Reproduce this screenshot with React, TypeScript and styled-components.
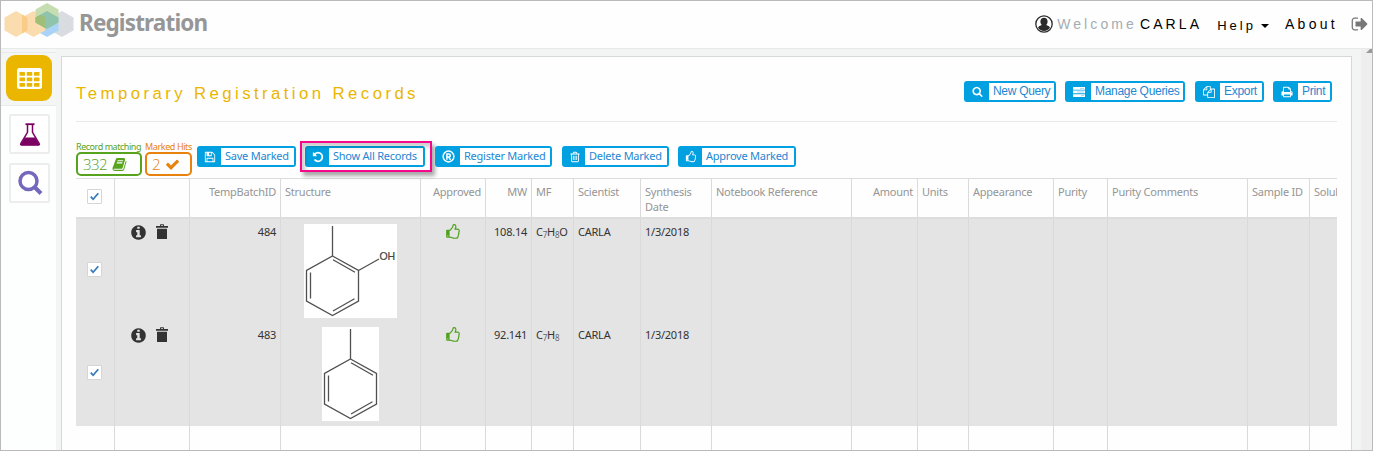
import React from "react";
import styled, { createGlobalStyle } from "styled-components";

const UI = `"Noto Sans", "Open Sans", sans-serif`;
const ARIAL = `"Liberation Sans", Arial, sans-serif`;
const BLUE = "#00a0e1";
const LINE = "#dddddd";

const GlobalStyle = createGlobalStyle`
  *, *::before, *::after { box-sizing: border-box; }
  html, body { margin: 0; padding: 0; background: #fff; }
  body { overflow: hidden; font-family: ${UI}; font-size: 12px; color: #333; }
`;

const Frame = styled.div`
  width: 1373px;
  height: 451px;
  border: 1px solid #bababa;
  display: flex;
  flex-direction: column;
  overflow: hidden;
  background: #fdfefe;
`;

const Header = styled.header`
  height: 48px;
  flex: none;
  display: flex;
  align-items: flex-start;
  border-bottom: 1px solid #e8eaea;
  background: #fefefe;
`;

const LogoMark = styled.svg`
  display: block;
  margin: 2px 0 0 3px;
`;

const LogoText = styled.div`
  margin: 7px 0 0 4px;
  font: 700 22.5px/30px ${UI};
  letter-spacing: -0.85px;
  color: #969696;
`;

const UserNav = styled.nav`
  margin-left: auto;
  display: flex;
  align-items: center;
  height: 46px;
  font-family: ${ARIAL};
  color: #000;
`;

const NavText = styled.span<{ $size?: number; $spacing: number; $color?: string; $ml: number; $drop?: number }>`
  font-size: ${(p) => p.$size ?? 14}px;
  line-height: 16px;
  letter-spacing: ${(p) => p.$spacing}px;
  color: ${(p) => p.$color ?? "#000"};
  margin-left: ${(p) => p.$ml}px;
  padding-top: ${(p) => p.$drop ?? 0}px;
`;

const Caret = styled.span`
  width: 0;
  height: 0;
  margin: 4px 0 0 5px;
  border: 4px solid transparent;
  border-top-color: #000;
  border-bottom: 0;
`;

const SignOut = styled.span`
  margin: 0 3px 0 13px;
  display: flex;
  color: #777;
`;

const Body = styled.div`
  flex: 1;
  min-height: 0;
  display: flex;
`;

const Sidebar = styled.aside`
  width: 55px;
  flex: none;
  border-top: 3px solid #f4f6f5;
  display: flex;
  flex-direction: column;
  align-items: flex-start;
  background: #fdfefe;
`;

const ActiveSlot = styled.div`
  width: 100%;
  height: 54px;
  border-top: 1px solid #e9ebeb;
  border-bottom: 1px solid #e9ebeb;
  background: #f4f6f5;
  padding: 2px 0 0 5px;
`;

const ActiveTile = styled.div`
  width: 46px;
  height: 46px;
  border-radius: 9px;
  background: #eab600;
  display: flex;
  align-items: center;
  justify-content: center;
`;

const Tile = styled.div<{ $mt: number }>`
  width: 41px;
  height: 40px;
  margin: ${(p) => p.$mt}px 0 0 8px;
  border: 2px solid #ededed;
  border-radius: 2px;
  background: #fff;
  display: flex;
  align-items: center;
  justify-content: center;
`;

const Main = styled.main`
  flex: 1;
  min-width: 0;
  background: #f3f5f5;
  padding: 7px 9px 0 5px;
`;

const Scrollbar = styled.div`
  width: 11px;
  flex: none;
  background: #eeeeee;
  display: flex;
  justify-content: flex-end;
`;

const Panel = styled.section`
  height: 100%;
  border: 1px solid #d6d9d9;
  border-bottom: 0;
  background: #fefefe;
  padding: 0 14px;
  display: flex;
  flex-direction: column;
`;

const TitleBar = styled.div`
  height: 65px;
  flex: none;
  display: flex;
  align-items: flex-start;
  justify-content: space-between;
  border-bottom: 1px solid #e8e8e8;
`;

const Title = styled.h1`
  margin: 27px 0 0;
  font: 400 16.8px/20px ${ARIAL};
  letter-spacing: 3.41px;
  color: #eab600;
  white-space: nowrap;
`;

const TopActions = styled.div`
  display: flex;
  margin: 24px 5px 0 0;
  gap: 9px;
  font: 400 12px/17px ${ARIAL};
  letter-spacing: -0.3px;
`;

const Toolbar = styled.div`
  height: 56px;
  flex: none;
  display: flex;
  padding-top: 19px;
`;

const Counter = styled.div<{ $color: string; $width: number; $gap: number }>`
  width: ${(p) => p.$width}px;
  margin-right: ${(p) => p.$gap}px;
  color: ${(p) => p.$color};
`;

const CounterLabel = styled.div<{ $spacing: number }>`
  height: 11px;
  font-size: 9px;
  line-height: 11px;
  letter-spacing: ${(p) => p.$spacing}px;
  white-space: nowrap;
`;

const CounterBox = styled.div`
  height: 24px;
  border: 2px solid currentColor;
  border-radius: 5px;
  display: flex;
  align-items: center;
  padding-left: 5px;
  gap: 5px;
  font: 300 15px/20px "Open Sans", ${UI};
  letter-spacing: -0.6px;
`;

const ActionRow = styled.div`
  display: flex;
  gap: 9px;
  padding-top: 5px;
  font: 400 11px/16px ${UI};
  letter-spacing: -0.24px;
`;

const Button = styled.button<{ $width: number; $icon: number; $after?: number }>`
  position: relative;
  width: ${(p) => p.$width}px;
  height: 21px;
  flex: none;
  margin: 0 ${(p) => p.$after ?? 0}px 0 0;
  padding: 0;
  border: 2px solid ${BLUE};
  border-radius: 3px;
  background: ${BLUE};
  display: grid;
  grid-template-columns: ${(p) => p.$icon - 2}px 1fr;
  font: inherit;
  letter-spacing: inherit;
  color: #2487d3;
`;

const ButtonIcon = styled.span`
  display: flex;
  align-items: center;
  justify-content: center;
  color: #fff;
`;

const ButtonLabel = styled.span`
  background: #fff;
  padding-left: 4px;
  text-align: left;
  white-space: nowrap;
`;

const Highlight = styled.span`
  position: absolute;
  left: -7px;
  top: -7px;
  width: 132px;
  height: 31px;
  border: 2px solid #f7078b;
  box-shadow: 3px 4px 4px rgba(0, 0, 0, 0.34), inset 3px 4px 4px rgba(0, 0, 0, 0.2);
  pointer-events: none;
`;

const Grid = styled.div`
  flex: 1;
  min-height: 0;
  display: flex;
  flex-direction: column;
  overflow: hidden;
  width: 1261px;
  border-top: 1px solid ${LINE};
`;

const Row = styled.div<{ $height?: number; $kind: "head" | "data" | "rest" }>`
  display: grid;
  grid-template-columns: 38px 75px 91px 140px 65px 46px 42px 67px 71px 140px 66px 51px 85px 54px 140px 62px 28px;
  ${(p) => (p.$height ? `height: ${p.$height}px; flex: none;` : "flex: 1;")}
  ${(p) => p.$kind === "head" && `border-bottom: 2px solid ${LINE}; color: #959595;`}
  ${(p) => p.$kind === "data" && "background: #e4e4e4; color: #333;"}
`;

const Cell = styled.div<{ $align?: "right" | "center" }>`
  min-width: 0;
  overflow: hidden;
  padding: 5px 4px;
  font-size: 11px;
  line-height: 15px;
  letter-spacing: -0.24px;
  text-align: ${(p) => p.$align ?? "left"};
  & + & { border-left: 1px solid #dadada; }
`;

const NoWrap = styled.span`
  white-space: nowrap;
`;

const CheckCell = styled(Cell)<{ $top: number }>`
  display: flex;
  padding: ${(p) => p.$top}px 0 0 11px;
`;

const CheckBox = styled.span`
  width: 15px;
  height: 15px;
  border: 1px solid #d6d6d6;
  border-radius: 1px;
  background: #fff;
  display: flex;
  align-items: center;
  justify-content: center;
`;

const ToolsCell = styled(Cell)`
  display: flex;
  align-items: flex-start;
  gap: 9px;
  padding: 5px 0 0 15px;
`;

const Picture = styled.svg`
  display: block;
  margin: 0 auto;
  background: #fff;
`;

const Sub = styled.sub`
  font-size: 8px;
  line-height: 0;
  vertical-align: -2px;
  color: #666;
`;

const PATHS: Record<string, string> = {
  thumb:
    "M384 1344q0-26-19-45t-45-19-45 19-19 45 19 45 45 19 45-19 19-45zm1152-576q0-51-39-89.5t-89-38.5h-352q0-58 48-159.5t48-160.5q0-98-32-145t-128-47q-26 26-38 85t-30.5 125.5-59.5 109.5q-22 23-77 91-4 5-23 30t-31.5 41-34.5 42.5-40 44-38.5 35.5-40 27-35.5 9h-32v640h32q13 0 31.5 3t33 6.5 38 11 35 11.5 35.5 12.5 29 10.5q211 73 342 73h121q192 0 192-167 0-26-5-56 30-16 47.5-52.5t17.5-73.5-18-69q53-50 53-119 0-25-10-55.5t-25-47.5q32-1 53.5-47t21.5-81zm128-1q0 89-49 163 9 33 9 69 0 77-38 144 3 21 3 43 0 101-60 178 1 139-85 219.5t-227 80.5h-129q-96 0-189.5-22.5t-216.5-65.5q-116-40-138-40h-288q-53 0-90.5-37.5t-37.5-90.5v-640q0-53 37.5-90.5t90.5-37.5h274q36-24 137-155 58-75 107-128 24-25 35.5-85.5t30.5-126.5 62-108q39-37 90-37 84 0 151 32.5t102 101.5 35 186q0 93-48 192h176q104 0 180 76t76 179z",
  check:
    "M1671 566q0 40-28 68l-724 724-136 136q-28 28-68 28t-68-28l-136-136-362-362q-28-28-28-68t28-68l136-136q28-28 68-28t68 28l294 295 656-657q28-28 68-28t68 28l136 136q28 28 28 68z",
  search:
    "M1216 832q0-185-131.5-316.5t-316.5-131.5-316.5 131.5-131.5 316.5 131.5 316.5 316.5 131.5 316.5-131.5 131.5-316.5zm512 832q0 52-38 90t-90 38q-54 0-90-38l-343-342q-179 124-399 124-143 0-273.5-55.5t-225-150-150-225-55.5-273.5 55.5-273.5 150-225 225-150 273.5-55.5 273.5 55.5 225 150 150 225 55.5 273.5q0 220-124 399l343 343q37 37 37 90z",
  undo:
    "M1664 896q0 156-61 298t-164 245-245 164-298 61q-172 0-327-72.5t-264-204.5q-7-10-6.5-22.5t8.5-20.5l137-138q10-9 25-9 16 2 23 12 73 95 179 147t225 52q104 0 198.5-40.5t163.5-109.5 109.5-163.5 40.5-198.5-40.5-198.5-109.5-163.5-163.5-109.5-198.5-40.5q-98 0-188 35.5t-160 101.5l137 138q31 30 14 69-17 40-59 40h-448q-26 0-45-19t-19-45v-448q0-42 40-59 39-17 69 14l130 129q107-101 244.5-156.5t284.5-55.5q156 0 298 61t245 164 164 245 61 298z",
  save:
    "M512 1536h768v-384h-768v384zm896 0h128v-896q0-14-10-38.5t-20-34.5l-281-281q-10-10-34-20t-39-10v416q0 40-28 68t-68 28h-576q-40 0-68-28t-28-68v-416h-128v1280h128v-416q0-40 28-68t68-28h832q40 0 68 28t28 68v416zm-384-928v-320q0-13-9.5-22.5t-22.5-9.5h-192q-13 0-22.5 9.5t-9.5 22.5v320q0 13 9.5 22.5t22.5 9.5h192q13 0 22.5-9.5t9.5-22.5zm640 32v928q0 40-28 68t-68 28h-1344q-40 0-68-28t-28-68v-1344q0-40 28-68t68-28h928q40 0 88 20t76 48l280 280q28 28 48 76t20 88z",
  print:
    "M448 1536h896v-256h-896v256zm0-640h896v-384h-160q-40 0-68-28t-28-68v-160h-640v640zm1152 64q0-26-19-45t-45-19-45 19-19 45 19 45 45 19 45-19 19-45zm128 0v416q0 13-9.5 22.5t-22.5 9.5h-224v160q0 40-28 68t-68 28h-960q-40 0-68-28t-28-68v-160h-224q-13 0-22.5-9.5t-9.5-22.5v-416q0-79 56.5-135.5t135.5-56.5h64v-544q0-40 28-68t68-28h672q40 0 88 20t76 48l152 152q28 28 48 76t20 88v256h64q79 0 135.5 56.5t56.5 135.5z",
  files:
    "M1696 384q40 0 68 28t28 68v1216q0 40-28 68t-68 28h-960q-40 0-68-28t-28-68v-288h-544q-40 0-68-28t-28-68v-672q0-40 20-88t48-76l408-408q28-28 76-48t88-20h416q40 0 68 28t28 68v328q68-40 128-40h416zm-544 213l-299 299h299v-299zm-640-384l-299 299h299v-299zm196 647l316-316v-416h-384v416q0 40-28 68t-68 28h-416v640h512v-256q0-40 20-88t48-76zm956 804v-1152h-384v416q0 40-28 68t-68 28h-416v640h896z",
  signOut:
    "M704 1440q0 4 1 20t.5 26.5-3 23.5-10 19.5-20.5 6.5h-320q-119 0-203.5-84.5t-84.5-203.5v-704q0-119 84.5-203.5t203.5-84.5h320q13 0 22.5 9.5t9.5 22.5q0 4 1 20t.5 26.5-3 23.5-10 19.5-20.5 6.5h-320q-66 0-113 47t-47 113v704q0 66 47 113t113 47h312l11.5 1 11.5 3 8 5.5 7 9 2 13.5zm928-544q0 26-19 45l-544 544q-19 19-45 19t-45-19-19-45v-288h-448q-26 0-45-19t-19-45v-384q0-26 19-45t45-19h448v-288q0-26 19-45t45-19 45 19l544 544q19 19 19 45z",
  trash:
    "M704 736v576q0 14-9 23t-23 9h-64q-14 0-23-9t-9-23v-576q0-14 9-23t23-9h64q14 0 23 9t9 23zm256 0v576q0 14-9 23t-23 9h-64q-14 0-23-9t-9-23v-576q0-14 9-23t23-9h64q14 0 23 9t9 23zm256 0v576q0 14-9 23t-23 9h-64q-14 0-23-9t-9-23v-576q0-14 9-23t23-9h64q14 0 23 9t9 23zm128 724v-948h-896v948q0 22 7 40.5t14.5 27 10.5 8.5h832q3 0 10.5-8.5t14.5-27 7-40.5zm-672-1076h448l-48-117q-7-9-17-11h-317q-10 2-17 11zm928 32v64q0 14-9 23t-23 9h-96v948q0 83-47 143.5t-113 60.5h-832q-66 0-113-58.5t-47-141.5v-952h-96q-14 0-23-9t-9-23v-64q0-14 9-23t23-9h309l70-167q15-37 54-63t79-26h320q40 0 79 26t54 63l70 167h309q14 0 23 9t9 23z",
  info:
    "M1152 1376v-160q0-14-9-23t-23-9h-96v-512q0-14-9-23t-23-9h-320q-14 0-23 9t-9 23v160q0 14 9 23t23 9h96v320h-96q-14 0-23 9t-9 23v160q0 14 9 23t23 9h448q14 0 23-9t9-23zm-128-896v-160q0-14-9-23t-23-9h-192q-14 0-23 9t-9 23v160q0 14 9 23t23 9h192q14 0 23-9t9-23zm640 416q0 209-103 385.5t-279.5 279.5-385.5 103-385.5-103-279.5-279.5-103-385.5 103-385.5 279.5-279.5 385.5-103 385.5 103 279.5 279.5 103 385.5z",
  book:
    "M1703 478q40 57 18 129l-275 906q-19 64-76.5 107.5t-122.5 43.5h-923q-77 0-148.5-53.5t-99.5-131.5q-24-67-2-127 0-4 3-27t4-37q1-8-3-21.5t-3-19.5q2-11 8-21t16.5-23.5 16.5-23.5q23-38 45-91.5t30-91.5q3-10 .5-30t-.5-28q3-11 17-28t17-23q21-36 42-92t25-90q1-9-2.5-32t.5-28q4-13 22-30.5t22-22.5q19-26 42.5-84.5t27.5-96.5q1-8-3-25.5t-2-26.5q2-8 9-18t18-23 17-21q8-12 16.5-30.5t15-35 16-36 19.5-32 26.5-23.5 36-11.5 47.5 5.5l-1 3q38-9 51-9h761q74 0 114 56t18 130l-274 906q-36 119-71.5 153.5t-128.5 34.5h-869q-27 0-38 15-11 16-1 43 24 70 144 70h923q29 0 56-15.5t35-41.5l300-987q7-22 5-57 38 15 59 43zm-1064 2q-4 13 2 22.5t20 9.5h608q13 0 25.5-9.5t16.5-22.5l21-64q4-13-2-22.5t-20-9.5h-608q-13 0-25.5 9.5t-16.5 22.5zm-83 256q-4 13 2 22.5t20 9.5h608q13 0 25.5-9.5t16.5-22.5l21-64q4-13-2-22.5t-20-9.5h-608q-13 0-25.5 9.5t-16.5 22.5z",
};

const Glyph = ({ name, size }: { name: string; size: number }) => (
  <svg width={size} height={size} viewBox="0 0 1792 1792" fill="currentColor">
    <path d={PATHS[name]} />
  </svg>
);

const ServerIcon = () => (
  <svg width="12" height="10" viewBox="0 0 12 10">
    <path fill="#fff" d="M0 0h12v2.7H0zM0 3.6h12v2.7H0zM0 7.2h12v2.7H0z" />
    <path stroke={BLUE} strokeWidth="0.8" d="M7 1.4h4M4 5h7M8 8.6h3" opacity="0.45" />
  </svg>
);

const RegisteredIcon = () => (
  <svg width="13" height="13" viewBox="0 0 13 13" fill="none" stroke="#fff">
    <circle cx="6.5" cy="6.5" r="5.4" strokeWidth="1.5" />
    <path strokeWidth="1.5" d="M4.9 9.8V3.9h1.9a1.5 1.5 0 0 1 0 3.1H4.9M6.8 7l1.7 2.8" />
  </svg>
);

const TrashSolid = () => (
  <svg width="12" height="15" viewBox="0 0 12 15" fill="#333">
    <path d="M0 2h4V.9Q4 .3 4.700.3h2.600Q8 .3 8 .9V2h4v1.700H0zM5 1.200V2h2v-.8zM1 4.700h10V15H1z" />
  </svg>
);

const CheckMark = () => (
  <svg width="9" height="9" viewBox="0 0 9 9" fill="none" stroke="#3278be" strokeWidth="1.7">
    <path d="M.7 4.700 3.100 7.300 8.300 1.200" />
  </svg>
);

const hex = (cx: number, cy: number, rx: number, ry: number) =>
  `M${cx} ${cy - ry}L${cx + rx} ${cy - ry / 2}V${cy + ry / 2}L${cx} ${cy + ry}L${cx - rx} ${cy + ry / 2}V${cy - ry / 2}Z`;

const Logo = () => (
  <LogoMark width="71" height="36" viewBox="4 3 71 36">
    <path d={hex(62, 24, 11.5, 13)} fill="#d9dce0" />
    <path d={hex(47, 24, 11.5, 13)} fill="#a9d4f8" />
    <path d={hex(33.5, 24, 11.5, 13)} fill="#fbdcae" />
    <path d={hex(16, 24, 11.5, 13)} fill="#fbdcae" />
    <path d="M22 14.500l5.500 3v13l-5.500 3z" fill="#f9cd88" />
    <path d={hex(47, 16, 11.5, 13)} fill="#c5ddb0" />
    <path d="M47 11 58.500 17.500V22.500L47 29 35.500 22.500V17.500Z" fill="#8fc3ab" />
    <path d="M35.500 17.500 40.500 14.700 45 17.500V27.900L35.500 22.500Z" fill="#9fbf76" />
  </LogoMark>
);

const UserIcon = () => (
  <svg width="18" height="18" viewBox="0 0 18 18">
    <circle cx="9" cy="9" r="8.200" fill="#fff" stroke="#2b2b2b" strokeWidth="1.300" />
    <path fill="#2b2b2b" d="M9 2.800c2.300 0 3.600 1.500 3.600 3.600 0 1.500-.6 2.900-1.500 3.700 1.900.7 3.300 1.300 3.900 2.400A7 7 0 0 1 9 16a7 7 0 0 1-6-3.500c.6-1.100 2-1.700 3.900-2.400C6 9.300 5.400 7.900 5.400 6.400 5.400 4.300 6.700 2.800 9 2.800z" />
  </svg>
);

const TableIcon = () => (
  <svg width="25" height="21" viewBox="0 0 25 21">
    <rect width="25" height="21" rx="2.500" fill="#fff" />
    <g fill="#eab600">
      {[4, 9.5, 15].map((y) =>
        [2.5, 9.75, 17].map((x) => <rect key={`${x}-${y}`} x={x} y={y} width="5.500" height="3.700" rx="0.400" />),
      )}
    </g>
  </svg>
);

const FlaskIcon = () => (
  <svg width="22" height="23" viewBox="0 0 22 23">
    <path d="M6.500 1.200h9" stroke="#7b0062" strokeWidth="1.800" />
    <path d="M8.500 1.500v7.800L1.800 20.700q-.5 1.200.8 1.200h16.800q1.300 0 .8-1.200L13.500 9.300V1.500" fill="none" stroke="#7b0062" strokeWidth="1.500" />
    <path d="M6 14.500h10l4.300 7q0 .8-1 .8H2.700q-1 0-1-.8z" fill="#7b0062" />
  </svg>
);

const Ring = ({ cx }: { cx: number }) => (
  <g>
    <path d={`M${cx} 2V32`} />
    <path d={`M${cx} 32l26 14.500v30.500L${cx} 91.500l-26-14.500V46.500z`} />
    <path d={`M${cx + 0.5} 35.800l22 12.500M${cx + 22} 74.800l-21.500 12.200M${cx - 22} 48.500v26`} />
  </g>
);

const Cresol = () => (
  <Picture width="93" height="94" viewBox="0 0 93 94" fill="none" stroke="#505050" strokeWidth="1.300">
    <Ring cx={28.5} />
    <path d="M54.500 46.500 75 35" />
    <text x="75.500" y="35.700" fill="#444" stroke="#444" strokeWidth="0.200" fontFamily="Liberation Sans" fontSize="10.500">OH</text>
  </Picture>
);

const Toluene = () => (
  <Picture width="57" height="94" viewBox="0 0 57 94" fill="none" stroke="#505050" strokeWidth="1.300">
    <Ring cx={28.5} />
  </Picture>
);

type ActionProps = { width: number; icon: number; glyph: React.ReactNode; label: string; marked?: boolean; after?: number };
const Action = ({ width, icon, glyph, label, marked, after }: ActionProps) => (
  <Button $width={width} $icon={icon} $after={after}>
    <ButtonIcon>{glyph}</ButtonIcon>
    <ButtonLabel>{label}</ButtonLabel>
    {marked && <Highlight />}
  </Button>
);

const SelectBox = ({ top }: { top: number }) => (
  <CheckCell $top={top}>
    <CheckBox>
      <CheckMark />
    </CheckBox>
  </CheckCell>
);

const Green = styled.span`
  display: flex;
  justify-content: center;
  color: #4ea01c;
`;

type Column = { title: string; right?: boolean; wrap?: boolean };
const COLUMNS: Column[] = [
  { title: "" },
  { title: "TempBatchID", right: true },
  { title: "Structure" },
  { title: "Approved", right: true },
  { title: "MW", right: true },
  { title: "MF" },
  { title: "Scientist" },
  { title: "Synthesis Date", wrap: true },
  { title: "Notebook Reference" },
  { title: "Amount", right: true },
  { title: "Units" },
  { title: "Appearance" },
  { title: "Purity" },
  { title: "Purity Comments" },
  { title: "Sample ID" },
  { title: "Solubility" },
];

type RecordProps = { id: string; picture: React.ReactNode; mw: string; mf: React.ReactNode; height: number };
const RecordRow = ({ id, picture, mw, mf, height }: RecordProps) => (
  <Row $kind="data" $height={height}>
    <SelectBox top={43} />
    <ToolsCell>
      <Glyph name="info" size={17} />
      <TrashSolid />
    </ToolsCell>
    <Cell $align="right">{id}</Cell>
    <Cell>{picture}</Cell>
    <Cell>
      <Green>
        <Glyph name="thumb" size={16} />
      </Green>
    </Cell>
    <Cell $align="right">{mw}</Cell>
    <Cell>
      <NoWrap>{mf}</NoWrap>
    </Cell>
    <Cell>CARLA</Cell>
    <Cell>1/3/2018</Cell>
    {COLUMNS.slice(8).map((c) => (
      <Cell key={c.title} />
    ))}
  </Row>
);

export default function App() {
  return (
    <Frame>
      <GlobalStyle />
      <Header>
        <Logo />
        <LogoText>Registration</LogoText>
        <UserNav>
          <UserIcon />
          <NavText $spacing={3.1} $color="#a3adb3" $ml={4}>Welcome</NavText>
          <NavText $spacing={3.1} $ml={3}>CARLA</NavText>
          <NavText $spacing={3} $size={13} $ml={15} $drop={3}>Help</NavText>
          <Caret />
          <NavText $spacing={3.3} $ml={16}>About</NavText>
          <SignOut>
            <Glyph name="signOut" size={18} />
          </SignOut>
        </UserNav>
      </Header>
      <Body>
        <Sidebar>
          <ActiveSlot>
            <ActiveTile>
              <TableIcon />
            </ActiveTile>
          </ActiveSlot>
          <Tile $mt={8}>
            <FlaskIcon />
          </Tile>
          <Tile $mt={9}>
            <svg width="26" height="26" viewBox="0 0 26 26" fill="none" stroke="#7468bd">
              <circle cx="11.500" cy="11" r="8.500" strokeWidth="3.500" />
              <path d="M17.500 17l6.500 6.500" strokeWidth="4" />
            </svg>
          </Tile>
        </Sidebar>
        <Main>
          <Panel>
            <TitleBar>
              <Title>Temporary Registration Records</Title>
              <TopActions>
                <Action width={92} icon={25} glyph={<Glyph name="search" size={11} />} label="New Query" />
                <Action width={120} icon={26} after={1} glyph={<ServerIcon />} label="Manage Queries" />
                <Action width={69} icon={25} glyph={<Glyph name="files" size={12} />} label="Export" />
                <Action width={59} icon={25} glyph={<Glyph name="print" size={12} />} label="Print" />
              </TopActions>
            </TitleBar>
            <Toolbar>
              <Counter $color="#57a31d" $width={66} $gap={3}>
                <CounterLabel $spacing={-0.46}>Record matching</CounterLabel>
                <CounterBox>
                  332 <Glyph name="book" size={15} />
                </CounterBox>
              </Counter>
              <Counter $color="#e8820c" $width={47} $gap={5}>
                <CounterLabel $spacing={-0.4}>Marked Hits</CounterLabel>
                <CounterBox>
                  2 <Glyph name="check" size={15} />
                </CounterBox>
              </Counter>
              <ActionRow>
                <Action width={99} icon={24} glyph={<Glyph name="save" size={12} />} label="Save Marked" />
                <Action width={120} icon={24} after={1} glyph={<Glyph name="undo" size={12} />} label="Show All Records" marked />
                <Action width={117} icon={25} after={1} glyph={<RegisteredIcon />} label="Register Marked" />
                <Action width={107} icon={23} glyph={<Glyph name="trash" size={12} />} label="Delete Marked" />
                <Action width={118} icon={24} glyph={<Glyph name="thumb" size={12} />} label="Approve Marked" />
              </ActionRow>
            </Toolbar>
            <Grid>
              <Row $kind="head" $height={40}>
                <SelectBox top={10} />
                {COLUMNS.map((c, i) => (
                  <Cell key={i} $align={c.right ? "right" : undefined}>
                    {c.wrap ? c.title : <NoWrap>{c.title}</NoWrap>}
                  </Cell>
                ))}
              </Row>
              <RecordRow id="484" height={103} picture={<Cresol />} mw="108.14" mf={<>C<Sub>7</Sub>H<Sub>8</Sub>O</>} />
              <RecordRow id="483" height={104} picture={<Toluene />} mw="92.141" mf={<>C<Sub>7</Sub>H<Sub>8</Sub></>} />
              <Row $kind="rest">
                <Cell />
                {COLUMNS.map((c, i) => (
                  <Cell key={i} />
                ))}
              </Row>
            </Grid>
          </Panel>
        </Main>
        <Scrollbar>
          <svg width="6" height="4" viewBox="0 0 6 4">
            <path d="M0 4 4 0h2v4z" fill="#999" />
          </svg>
        </Scrollbar>
      </Body>
    </Frame>
  );
}
